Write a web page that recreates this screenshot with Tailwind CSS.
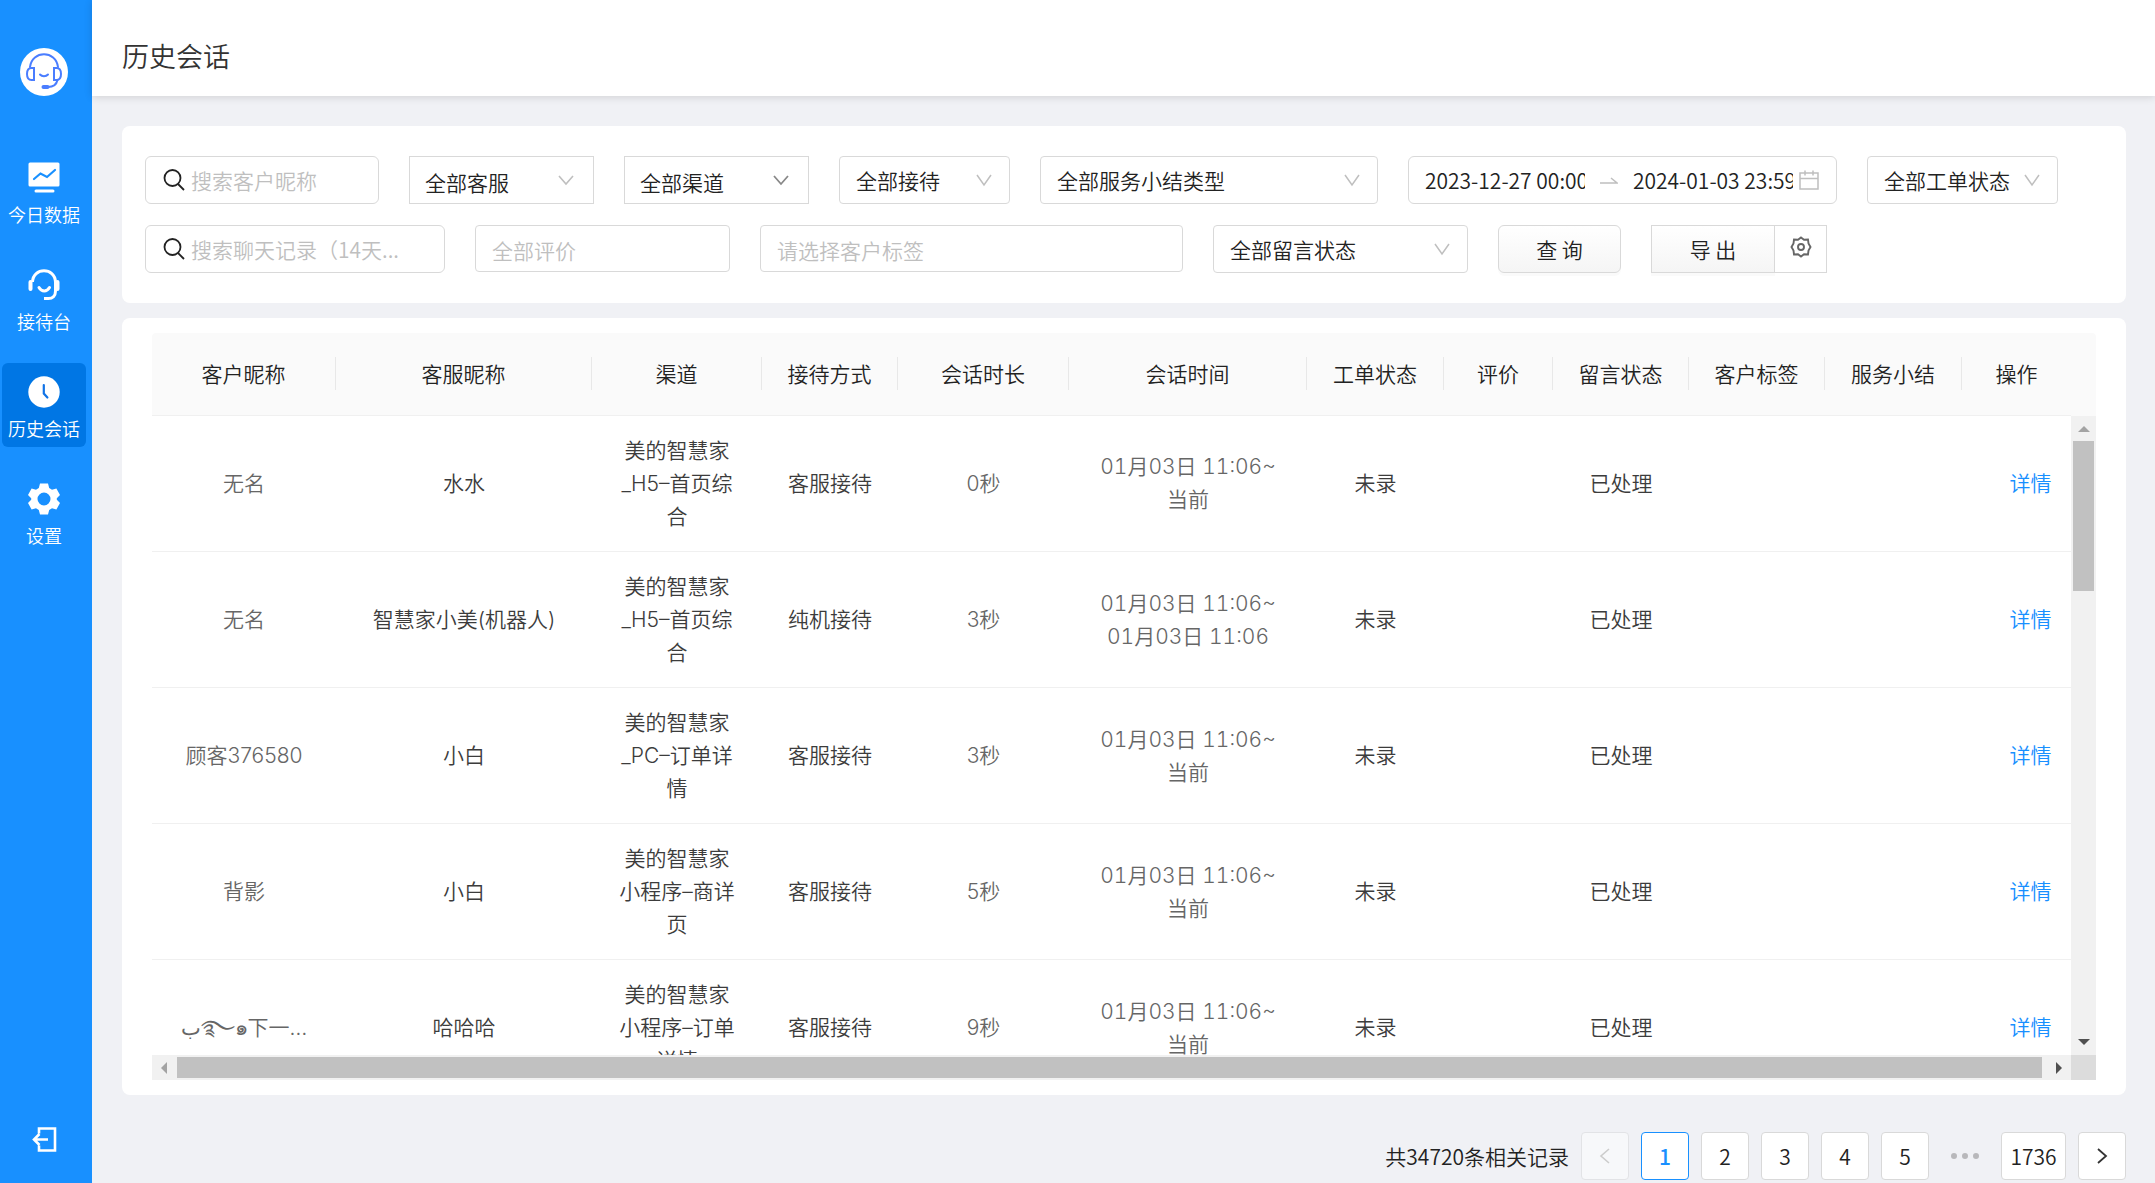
<!DOCTYPE html>
<html lang="zh-CN">
<head>
<meta charset="utf-8">
<title>历史会话</title>
<script src="https://cdn.jsdelivr.net/npm/@tailwindcss/browser@4"></script>
</head>
<body class="flex h-screen overflow-hidden bg-[#f0f1f5] font-['Noto_Sans_CJK_SC',sans-serif] text-[21px] leading-[33px] font-[350] text-[#222]">

<aside class="flex w-[92px] shrink-0 flex-col bg-[#1890ff] pr-1 text-lg leading-6 text-white">
  <a href="#" aria-label="首页" class="mt-12 flex justify-center">
    <svg class="size-12" viewBox="0 0 48 48" fill="none">
      <circle cx="24" cy="24" r="24" fill="#fff"/>
      <g stroke="#4a7dff" stroke-width="2" stroke-linecap="round">
        <path d="M10 19C12 2 36 2 38 19"/>
        <path d="M14 20v12h-2.500c-2.500 0-4.500-2-4.500-6s2-6 4.500-6zM34 20v12h2.500c2.500 0 4.500-2 4.500-6s-2-6-4.500-6z"/>
        <path d="M20 26.500c2 2.300 6 2.300 8 0M37.500 32c-1 4.500-4.500 7-9.500 7"/>
        <path d="M23.500 39h4" stroke-width="4"/>
      </g>
    </svg>
  </a>
  <nav class="mt-[53px] flex flex-col gap-[23px] px-0.5">
    <a href="#" class="flex h-[84px] flex-col items-center rounded-md pt-[13px]">
      <svg class="size-8" viewBox="0 0 32 32" fill="none"><rect x="0.500" y="0.500" width="31" height="24" rx="1.500" fill="#fff"/><path d="M8 29h17" stroke="#fff" stroke-width="3" stroke-linecap="round"/><path d="M6 17l6.500-5.500 6.500 3.500 8-7" stroke="#1890ff" stroke-width="2.200" stroke-linecap="round"/></svg>
      <span class="mt-2">今日数据</span>
    </a>
    <a href="#" class="flex h-[84px] flex-col items-center rounded-md pt-[13px]">
      <svg class="size-8" viewBox="0 0 32 32" fill="none" stroke="#fff"><path d="M4.500 13C5 -2 27 -2 27.500 13v9c0 5-3 7.500-7 7.500h-4.500" stroke-width="3"/><path d="M2.500 13v7M29.500 13v7" stroke-width="4" stroke-linecap="round"/><path d="M11 18.500c2.500 4.500 8 4.500 10.500 0" stroke-width="3" stroke-linecap="round"/></svg>
      <span class="mt-2">接待台</span>
    </a>
    <a href="#" aria-current="page" class="flex h-[84px] flex-col items-center rounded-md bg-[#0076e4] pt-[13px]">
      <svg class="size-8" viewBox="0 0 32 32" fill="none"><circle cx="16" cy="16" r="15.700" fill="#fff"/><path d="M15.800 9v8.500l3.600 4" stroke="#1173e6" stroke-width="2.200" stroke-linecap="round"/></svg>
      <span class="mt-2">历史会话</span>
    </a>
    <a href="#" class="flex h-[84px] flex-col items-center rounded-md pt-[13px]">
      <svg class="size-8" viewBox="0 0 32 32"><path fill="#fff" fill-rule="evenodd" d="M12 0.500h8l1.200 4.600 2.800 1.600 4.400-1.300 3.600 6.600-3.200 3.200v1.600l3.200 3.200-3.600 6.600-4.400-1.300-2.800 1.600-1.200 4.600h-8l-1.200-4.600-2.800-1.600-4.400 1.300L0 20l3.200-3.200v-1.600L0 12l3.600-6.600L8 6.700l2.800-1.600zM16 9.500a6.500 6.500 0 1 0 0 13 6.500 6.500 0 0 0 0-13z"/></svg>
      <span class="mt-2">设置</span>
    </a>
  </nav>
  <button type="button" aria-label="退出" class="mt-auto mb-[30px] flex justify-center">
    <svg class="size-7" viewBox="0 0 28 28" fill="none" stroke="#fff" stroke-width="2.600"><path d="M9 8.500V3.500h16v22H9V20.500M18 14.500H5M9.500 9l-5.500 5.500 5.500 5.500"/></svg>
  </button>
</aside>

<div class="flex min-w-0 flex-1 flex-col">
  <header class="flex h-24 shrink-0 items-center bg-white px-[30px] pt-4 shadow-[0_1px_8px_rgba(0,0,0,0.14)]">
    <h1 class="text-[27px] leading-9 text-[#333]">历史会话</h1>
  </header>

  <main class="flex min-h-0 flex-1 flex-col px-[30px] pt-[30px] pb-[3px] pr-[29px]">
    <form class="flex shrink-0 flex-wrap gap-x-[30px] gap-y-[21px] rounded-lg bg-white px-[23px] py-[30px]">
      <label class="flex h-12 w-[234px] items-center gap-1.5 rounded-md border border-[#d9d9d9] pl-[17px] pr-3">
        <svg class="size-[22px] shrink-0" viewBox="0 0 22 22" fill="none" stroke="#222" stroke-width="1.800"><circle cx="9.500" cy="9" r="8"/><path d="M15 15l6 6"/></svg>
        <input aria-label="搜索客户昵称" placeholder="搜索客户昵称" class="w-full min-w-0 outline-none placeholder:text-[#bfbfbf]">
      </label>
      <div class="relative h-12 w-[185px]">
        <select aria-label="客服" class="h-full w-full appearance-none border border-[#d9d9d9] pt-1 pl-[15px]"><option>全部客服</option></select>
        <svg class="pointer-events-none absolute top-4 right-5 size-4" viewBox="0 0 16 16" fill="none" stroke="#bfbfbf" stroke-width="1.600"><path d="M1 4l7 8 7-8"/></svg>
      </div>
      <div class="relative h-12 w-[185px]">
        <select aria-label="渠道" class="h-full w-full appearance-none border border-[#d9d9d9] pt-1 pl-[15px]"><option>全部渠道</option></select>
        <svg class="pointer-events-none absolute top-4 right-5 size-4" viewBox="0 0 16 16" fill="none" stroke="#888" stroke-width="1.800"><path d="M1 4l7 8 7-8"/></svg>
      </div>
      <div class="relative h-12 w-[171px]">
        <select aria-label="接待" class="h-full w-full appearance-none rounded-sm border border-[#d9d9d9] pl-4"><option>全部接待</option></select>
        <svg class="pointer-events-none absolute top-4 right-[18px] size-4" viewBox="0 0 16 16" fill="none" stroke="#bfbfbf" stroke-width="1.500"><path d="M1 3l7 10 7-10"/></svg>
      </div>
      <div class="relative h-12 w-[338px]">
        <select aria-label="服务小结类型" class="h-full w-full appearance-none rounded-sm border border-[#d9d9d9] pl-4"><option>全部服务小结类型</option></select>
        <svg class="pointer-events-none absolute top-4 right-[18px] size-4" viewBox="0 0 16 16" fill="none" stroke="#bfbfbf" stroke-width="1.500"><path d="M1 3l7 10 7-10"/></svg>
      </div>
      <div class="flex h-12 w-[429px] items-center rounded-md border border-[#d9d9d9] pr-[17px] pl-4">
        <input aria-label="开始时间" value="2023-12-27 00:00:00" class="w-[160px] outline-none">
        <svg class="mx-[15px] size-[18px] shrink-0" viewBox="0 0 18 18" fill="none" stroke="#bfbfbf" stroke-width="1.500"><path d="M0 12h17l-6-5"/></svg>
        <input aria-label="结束时间" value="2024-01-03 23:59:59" class="w-[160px] outline-none">
        <svg class="ml-auto size-5 shrink-0" viewBox="0 0 20 20" fill="none" stroke="#bfbfbf" stroke-width="1.500"><path d="M1 3h18v16H1zM1 8.500h18M6 0.500v5M14 0.500v5"/></svg>
      </div>
      <div class="relative h-12 w-[191px]">
        <select aria-label="工单状态" class="h-full w-full appearance-none rounded-sm border border-[#d9d9d9] pl-4"><option>全部工单状态</option></select>
        <svg class="pointer-events-none absolute top-4 right-[18px] size-4" viewBox="0 0 16 16" fill="none" stroke="#bfbfbf" stroke-width="1.500"><path d="M1 3l7 10 7-10"/></svg>
      </div>

      <label class="flex h-12 w-[300px] items-center gap-1.5 rounded-md border border-[#d9d9d9] pl-[17px] pr-3">
        <svg class="size-[22px] shrink-0" viewBox="0 0 22 22" fill="none" stroke="#222" stroke-width="1.800"><circle cx="9.500" cy="9" r="8"/><path d="M15 15l6 6"/></svg>
        <input aria-label="搜索聊天记录" placeholder="搜索聊天记录（14天..." class="w-full min-w-0 outline-none placeholder:text-[#bfbfbf]">
      </label>
      <input aria-label="评价" placeholder="全部评价" class="h-[47px] w-[255px] rounded-sm border border-[#d9d9d9] pt-0.5 pl-4 outline-none placeholder:text-[#bfbfbf]">
      <input aria-label="客户标签" placeholder="请选择客户标签" class="h-[47px] w-[423px] rounded-sm border border-[#d9d9d9] pt-0.5 pl-4 outline-none placeholder:text-[#bfbfbf]">
      <div class="relative h-12 w-[255px]">
        <select aria-label="留言状态" class="h-full w-full appearance-none rounded-sm border border-[#d9d9d9] pl-4"><option>全部留言状态</option></select>
        <svg class="pointer-events-none absolute top-4 right-[18px] size-4" viewBox="0 0 16 16" fill="none" stroke="#bfbfbf" stroke-width="1.500"><path d="M1 3l7 10 7-10"/></svg>
      </div>
      <button type="button" class="h-12 w-[123px] rounded-md border border-[#d9d9d9] bg-linear-to-b from-white to-[#f5f5f5] shadow-[0_3px_0_rgba(0,0,0,0.02)]">查 询</button>
      <div class="flex h-12">
        <button type="button" class="w-[124px] border border-[#d9d9d9] bg-linear-to-b from-white to-[#f5f5f5] shadow-[0_3px_0_rgba(0,0,0,0.02)]">导 出</button>
        <button type="button" aria-label="导出设置" class="-ml-px flex w-[53px] justify-center border border-[#d9d9d9] pt-[10px]">
          <svg class="size-[22px]" viewBox="0 0 22 22" fill="none" stroke="#666" stroke-width="1.900"><path d="M11 1.500l3 2.300 4-.3.500 4L20.500 11l-2 3.500-.500 4-4-.300L11 20.500l-3-2.300-4 .3-.500-4L1.500 11l2-3.500.500-4 4 .300z"/><circle cx="11" cy="11" r="3"/></svg>
        </button>
      </div>
    </form>

    <section class="mt-[15px] flex min-h-0 flex-1 flex-col rounded-lg bg-white px-[30px] py-[15px]">
      <div class="rounded-t-sm bg-[#fafafa] pr-[25px]">
        <table class="w-full table-fixed" aria-label="列标题">
          <colgroup><col class="w-[184px]"><col class="w-[256px]"><col class="w-[170px]"><col class="w-[136px]"><col class="w-[171px]"><col class="w-[238px]"><col class="w-[137px]"><col class="w-[109px]"><col class="w-[136px]"><col class="w-[136px]"><col class="w-[137px]"><col class="w-[109px]"></colgroup>
          <thead><tr id="head" class="h-[82px] border-b border-[#f0f0f0]"></tr></thead>
        </table>
      </div>
      <div class="grid min-h-0 flex-1 grid-cols-[1fr_25px] grid-rows-[1fr_25px]">
        <div class="min-h-0 overflow-hidden font-['Inter','Noto_Sans_CJK_SC',sans-serif] text-[#3c3c3c]">
          <table class="w-full table-fixed" aria-label="会话记录">
            <colgroup><col class="w-[184px]"><col class="w-[256px]"><col class="w-[170px]"><col class="w-[136px]"><col class="w-[171px]"><col class="w-[238px]"><col class="w-[137px]"><col class="w-[109px]"><col class="w-[136px]"><col class="w-[136px]"><col class="w-[137px]"><col class="w-[109px]"></colgroup>
            <tbody id="rows"></tbody>
          </table>
        </div>
        <div class="flex flex-col items-center bg-[#f1f1f1]">
          <svg class="mt-[10px] h-[6px] w-3" viewBox="0 0 12 6"><path d="M0 6L6 0l6 6z" fill="#a3a3a3"/></svg>
          <div class="mt-[9px] h-[150px] w-[21px] bg-[#c1c1c1]"></div>
          <svg class="mt-auto mb-[10px] h-[6px] w-3" viewBox="0 0 12 6"><path d="M0 0h12L6 6z" fill="#505050"/></svg>
        </div>
        <div class="flex items-center bg-[#f1f1f1]">
          <svg class="ml-[9px] h-3 w-[6px]" viewBox="0 0 6 12"><path d="M6 0v12L0 6z" fill="#a3a3a3"/></svg>
          <div class="ml-[10px] h-[21px] flex-1 bg-[#c1c1c1]"></div>
          <svg class="mr-[9px] ml-[14px] h-3 w-[6px]" viewBox="0 0 6 12"><path d="M0 0v12l6-6z" fill="#505050"/></svg>
        </div>
        <div class="bg-[#dcdcdc]"></div>
      </div>
    </section>

    <nav aria-label="分页" class="mt-[37px] flex shrink-0 items-center justify-end gap-3">
      <span>共34720条相关记录</span>
      <button type="button" disabled aria-label="上一页" class="flex size-12 items-center justify-center rounded-sm border border-[#e2e3e6] bg-[#f7f8fa]"><svg class="size-4" viewBox="0 0 16 16" fill="none" stroke="#ccc" stroke-width="1.600"><path d="M12 1L4 8l8 7"/></svg></button>
      <button type="button" aria-current="page" class="size-12 rounded-sm border border-[#1890ff] bg-white font-medium text-[#1890ff]">1</button>
      <button type="button" class="size-12 rounded-sm border border-[#d9d9d9] bg-white">2</button>
      <button type="button" class="size-12 rounded-sm border border-[#d9d9d9] bg-white">3</button>
      <button type="button" class="size-12 rounded-sm border border-[#d9d9d9] bg-white">4</button>
      <button type="button" class="size-12 rounded-sm border border-[#d9d9d9] bg-white">5</button>
      <span class="flex w-12 items-center justify-center gap-[5px]"><i class="size-[6px] rounded-full bg-[#b8b8bb]"></i><i class="size-[6px] rounded-full bg-[#b8b8bb]"></i><i class="size-[6px] rounded-full bg-[#b8b8bb]"></i></span>
      <button type="button" class="h-12 w-[65px] rounded-sm border border-[#d9d9d9] bg-white">1736</button>
      <button type="button" aria-label="下一页" class="flex size-12 items-center justify-center rounded-sm border border-[#d9d9d9] bg-white"><svg class="size-4" viewBox="0 0 16 16" fill="none" stroke="#333" stroke-width="1.800"><path d="M4 1l8 7-8 7"/></svg></button>
    </nav>
  </main>
</div>

<script>
  const heads = ['客户昵称', '客服昵称', '渠道', '接待方式', '会话时长', '会话时间', '工单状态', '评价', '留言状态', '客户标签', '服务小结', '操作'];
  document.getElementById('head').innerHTML = heads.map((h, i) =>
    `<th scope="col" class="p-0 font-[350]"><div class="h-[33px] ${i < heads.length - 1 ? 'border-r border-[#e8e8e8]' : ''}">${h}</div></th>`).join('');

  const rows = [
    ['无名', '水水', '美的智慧家<br>_H5–首页综合', '客服接待', '0秒', '当前'],
    ['无名', '智慧家小美(机器人)', '美的智慧家<br>_H5–首页综合', '纯机接待', '3秒', '01月03日 11:06'],
    ['顾客376580', '小白', '美的智慧家<br>_PC–订单详情', '客服接待', '3秒', '当前'],
    ['背影', '小白', '美的智慧家<br>小程序–商详页', '客服接待', '5秒', '当前'],
    ['ب࿐๑下一…', '哈哈哈', '美的智慧家<br>小程序–订单详情', '客服接待', '9秒', '当前']
  ];
  document.getElementById('rows').innerHTML = rows.map(r => `
    <tr class="h-[136px] border-b border-[#f0f0f0] text-center">
      <td class="truncate px-6 text-[#666]">${r[0]}</td>
      <td>${r[1]}</td>
      <td class="px-6 py-[18px] break-all">${r[2]}</td>
      <td>${r[3]}</td>
      <td class="text-[#666]">${r[4]}</td>
      <td class="text-[#666] tabular-nums">01月03日 11:06~<br>${r[5]}</td>
      <td>未录</td><td></td><td>已处理</td><td></td><td></td>
      <td class="pl-7"><a href="#" class="text-[#1890ff]">详情</a></td>
    </tr>`).join('');
</script>
</body>
</html>
